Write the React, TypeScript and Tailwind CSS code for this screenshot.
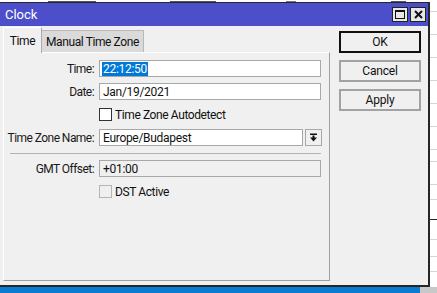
import { ReactNode } from 'react'

const font = { fontFamily: '"Roboto", "Liberation Sans", sans-serif' }

function Label({ children }: { children: ReactNode }) {
  return <div className="w-[91px] shrink-0 whitespace-nowrap pr-[1px] text-right text-[12px] tracking-[-0.55px] text-[#1a1a1a]">{children}</div>
}

function Field({ value, selected, readOnly, width = 'w-[222px]' }: { value: string; selected?: boolean; readOnly?: boolean; width?: string }) {
  return (
    <div
      className={`flex h-[17px] ${width} items-center border border-[#a8a8a8] pl-[2px] text-[12px] leading-none tracking-[-0.3px] ${
        readOnly ? 'bg-[#f0f0f0]' : 'bg-white'
      }`}
    >
      {selected ? <span className="bg-[#0078d7] px-[1px] py-[1px] text-white">{value}</span> : <span className="px-[1px] text-[#111]">{value}</span>}
    </div>
  )
}

function Check({ label, disabled }: { label: string; disabled?: boolean }) {
  return (
    <div className="flex items-center gap-[3px]">
      <div className={`h-[13px] w-[13px] border ${disabled ? 'border-[#b5b5b5] bg-[#f0f0f0]' : 'border-[#333] bg-white'}`} />
      <span className="text-[12px] tracking-[-0.4px] text-[#111]">{label}</span>
    </div>
  )
}

function Row({ label, children }: { label?: string; children: ReactNode }) {
  return (
    <div className="flex h-[23px] items-center gap-[4px]">
      <Label>{label ? `${label}:` : ''}</Label>
      {children}
    </div>
  )
}

function DialogButton({ children, primary }: { children: ReactNode; primary?: boolean }) {
  return (
    <div
      className={`flex h-[22px] w-[82px] items-center justify-center text-[12px] tracking-[-0.2px] text-[#111] ${
        primary ? 'border-2 border-[#111]' : 'border-2 border-[#a3a3a3]'
      }`}
    >
      {children}
    </div>
  )
}

export default function App() {
  const stripLines = [10, 23, 23, 23, 23, 23, 23, 12, 23, 15, 20, 20, 17, 15]

  return (
    <div className="flex h-[293px] w-[437px] flex-col overflow-hidden bg-white" style={font}>
      {/* window behind, top edge */}
      <div className="flex h-[2px] shrink-0 items-end gap-0 bg-white">
        <div className="ml-[48px] h-[1px] w-[48px] bg-[#555]" />
        <div className="ml-[74px] h-[1px] w-[46px] bg-[#555]" />
        <div className="ml-[70px] h-[1px] w-[10px] bg-[#777]" />
        <div className="ml-[95px] h-[1px] w-[15px] bg-[#555]" />
      </div>

      <div className="flex h-[285px] shrink-0">
        {/* Clock window */}
        <div className="flex w-[430px] shrink-0 flex-col border-t border-r-2 border-b-2 border-[#262626] bg-[#f0f0f0]">
          <div className="flex h-[23px] shrink-0 items-center justify-between bg-[#4c4fc9] pl-[5px] pr-[2px]">
            <span className="text-[13px] text-white">Clock</span>
            <div className="flex gap-[2px]">
              <div className="flex h-[15px] w-[16px] items-center justify-center border border-[#222] bg-[#e8e8e8]">
                <div className="h-[9px] w-[10px] border border-t-2 border-[#111]" />
              </div>
              <div className="flex h-[15px] w-[16px] items-center justify-center border border-[#222] bg-[#e8e8e8]">
                <svg width="9" height="9" viewBox="0 0 9 9">
                  <path d="M1 1 L8 8 M8 1 L1 8" stroke="#111" strokeWidth="2" />
                </svg>
              </div>
            </div>
          </div>

          <div className="flex flex-1 pt-[1px]">
            {/* tabs + panel */}
            <div className="ml-[3px] flex w-[327px] shrink-0 flex-col pb-[4px]">
              <div className="flex h-[25px] shrink-0 items-end text-[12px] tracking-[-0.4px]">
                <div className="relative z-10 -mb-px flex h-[26px] w-[39px] items-center justify-center border-t border-l border-r border-t-white border-l-white border-r-[#a9a9a9] bg-[#f0f0f0] text-[#111]">
                  Time
                </div>
                <div className="flex h-[22px] w-[102px] items-center justify-center border-t border-r border-[#b8b8b8] bg-[#dadada] text-[#111]">
                  Manual Time Zone
                </div>
              </div>
              <div className="flex flex-1 flex-col border border-t-white border-l-white border-r-[#a0a0a0] border-b-[#a0a0a0] pt-[4px]">
                <Row label="Time">
                  <Field value="22:12:50" selected />
                </Row>
                <Row label="Date">
                  <Field value="Jan/19/2021" />
                </Row>
                <Row>
                  <Check label="Time Zone Autodetect" />
                </Row>
                <Row label="Time Zone Name">
                  <div className="flex gap-[2px]">
                    <Field value="Europe/Budapest" width="w-[204px]" />
                    <div className="flex h-[17px] w-[17px] items-center justify-center border border-[#a8a8a8] bg-[#f0f0f0]">
                      <svg width="9" height="9" viewBox="0 0 9 9">
                        <rect x="1" y="0.5" width="7" height="1.5" fill="#111" />
                        <rect x="3.5" y="2.5" width="2" height="2.5" fill="#111" />
                        <path d="M1 4.5 H8 L4.5 8.5 Z" fill="#111" />
                      </svg>
                    </div>
                  </div>
                </Row>
                <div className="flex h-[8px] items-center pl-[6px]">
                  <div className="h-[1px] w-[311px] bg-[#b4b4b4]" />
                </div>
                <Row label="GMT Offset">
                  <Field value="+01:00" readOnly />
                </Row>
                <Row>
                  <Check label="DST Active" disabled />
                </Row>
              </div>
            </div>

            {/* dialog buttons */}
            <div className="ml-[9px] flex flex-col gap-[3px] pt-[4px]">
              <DialogButton primary>OK</DialogButton>
              <div className="h-[1px]" />
              <DialogButton>Cancel</DialogButton>
              <div className="h-[1px]" />
              <DialogButton>Apply</DialogButton>
            </div>
          </div>
        </div>

        {/* list window to the right */}
        <div className="flex flex-1 flex-col bg-white">
          {stripLines.map((h, i) => (
            <div key={i} className={`shrink-0 border-b ${i === 10 ? 'border-[#222]' : 'border-[#d4d4d4]'}`} style={{ height: h }} />
          ))}
        </div>
      </div>

      {/* taskbar */}
      <div className="flex flex-1">
        <div className="flex-1 bg-[#0a7bd0]" />
        <div className="w-[17px] bg-[#c8c8c8]" />
      </div>
    </div>
  )
}
